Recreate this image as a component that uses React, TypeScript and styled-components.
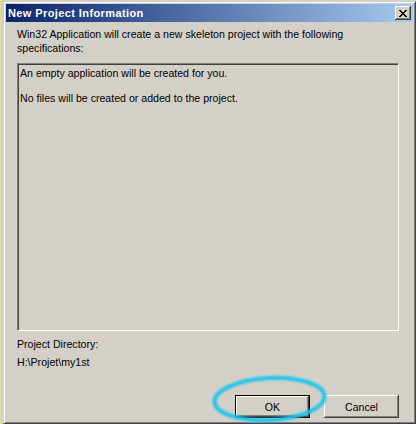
import React from "react";
import styled, { createGlobalStyle, css } from "styled-components";

const GlobalStyle = createGlobalStyle`
  html, body {
    margin: 0;
    padding: 0;
    background: #d4d0c8;
  }
  body {
    font-family: "Liberation Sans", Arial, sans-serif;
    font-size: 10.6px;
    color: #000;
  }
`;

const Desktop = styled.div`
  position: relative;
  width: 416px;
  height: 424px;
  overflow: hidden;
  box-sizing: border-box;
  padding: 1px 0 0 2px;
  background: #d4d0c8;
  border-left: 1px dotted #ecec70;
`;

const Window = styled.div`
  width: 413px;
  height: 423px;
  box-sizing: border-box;
  display: flex;
  flex-direction: column;
  padding: 2px;
  background: #d4d0c8;
  border: 1px solid;
  border-color: #d4d0c8 #404040 #404040 #d4d0c8;
  box-shadow: inset 1px 1px #ffffff, inset -1px -1px #808080;
`;

const Caption = styled.div`
  height: 18px;
  flex-shrink: 0;
  display: flex;
  align-items: center;
  justify-content: space-between;
  padding: 0 2px;
  background: linear-gradient(to right, #0a246a, #a6caf0);
`;

const CaptionTitle = styled.span`
  color: #ffffff;
  font-weight: bold;
  font-size: 11px;
  letter-spacing: 0.4px;
`;

const bevel = css`
  background: #d4d0c8;
  box-shadow: inset -1px -1px #404040, inset 1px 1px #ffffff,
    inset -2px -2px #808080, inset 2px 2px #d4d0c8;
`;

const CloseButton = styled.div`
  width: 16px;
  height: 14px;
  display: flex;
  align-items: center;
  justify-content: center;
  ${bevel}
  svg {
    margin-left: -1px;
  }
`;

const Body = styled.div`
  flex: 1;
  display: flex;
  flex-direction: column;
  padding: 5px 14px 3px 11px;
`;

const Text = styled.p`
  margin: 0;
  line-height: 14px;
  white-space: nowrap;
`;

const InfoBox = styled.div`
  margin-top: 8px;
  height: 268px;
  box-sizing: border-box;
  padding: 3px 2px;
  border: 1px solid;
  border-color: #808080 #ffffff #ffffff #808080;
  box-shadow: inset 1px 1px #404040, inset -1px -1px #d4d0c8;
`;

const InfoLine = styled.p`
  margin: 0 0 13px 0;
  line-height: 12px;
`;

const DirBlock = styled.div`
  margin-top: 6px;
  display: flex;
  flex-direction: column;
  gap: 4px;
`;

const ButtonRow = styled.div`
  margin-top: auto;
  display: flex;
  justify-content: flex-end;
  gap: 14px;
`;

const Button = styled.div<{ $default?: boolean }>`
  width: 75px;
  height: 23px;
  box-sizing: border-box;
  display: flex;
  align-items: center;
  justify-content: center;
  ${bevel}
  ${(p) =>
    p.$default &&
    css`
      border: 1px solid #000;
      box-shadow: inset -1px -1px #404040, inset 1px 1px #ffffff,
        inset -2px -2px #808080;
    `}
`;

const Highlight = styled.svg`
  position: absolute;
  left: 206px;
  top: 372px;
  pointer-events: none;
`;

const CloseGlyph = () => (
  <svg width="8" height="7" viewBox="0 0 8 7" shapeRendering="crispEdges">
    <path
      fill="#000"
      d="M0 0h2v1H0zM6 0h2v1H6zM1 1h2v1H1zM5 1h2v1H5zM2 2h4v1H2zM3 3h2v1H3zM2 4h4v1H2zM1 5h2v1H1zM5 5h2v1H5zM0 6h2v1H0zM6 6h2v1H6z"
    />
  </svg>
);

const App = () => {
  return (
    <>
      <GlobalStyle />
      <Desktop>
        <Window>
          <Caption>
            <CaptionTitle>New Project Information</CaptionTitle>
            <CloseButton>
              <CloseGlyph />
            </CloseButton>
          </Caption>
          <Body>
            <Text>
              Win32 Application will create a new skeleton project with the following
              <br />
              specifications:
            </Text>
            <InfoBox>
              <InfoLine>An empty application will be created for you.</InfoLine>
              <InfoLine>No files will be created or added to the project.</InfoLine>
            </InfoBox>
            <DirBlock>
              <Text>Project Directory:</Text>
              <Text>H:\Projet\my1st</Text>
            </DirBlock>
            <ButtonRow>
              <Button $default>OK</Button>
              <Button>Cancel</Button>
            </ButtonRow>
          </Body>
        </Window>
        <Highlight width="126" height="54" viewBox="0 0 126 54">
          <defs>
            <filter id="glow" x="-10%" y="-20%" width="120%" height="140%">
              <feGaussianBlur stdDeviation="0.8" />
            </filter>
          </defs>
          <ellipse
            cx="62.5"
            cy="27"
            rx="55"
            ry="21"
            fill="none"
            stroke="#1ec4ee"
            strokeWidth="4"
            filter="url(#glow)"
            transform="rotate(-3 62.5 27)"
          />
        </Highlight>
      </Desktop>
    </>
  );
};

export default App;
